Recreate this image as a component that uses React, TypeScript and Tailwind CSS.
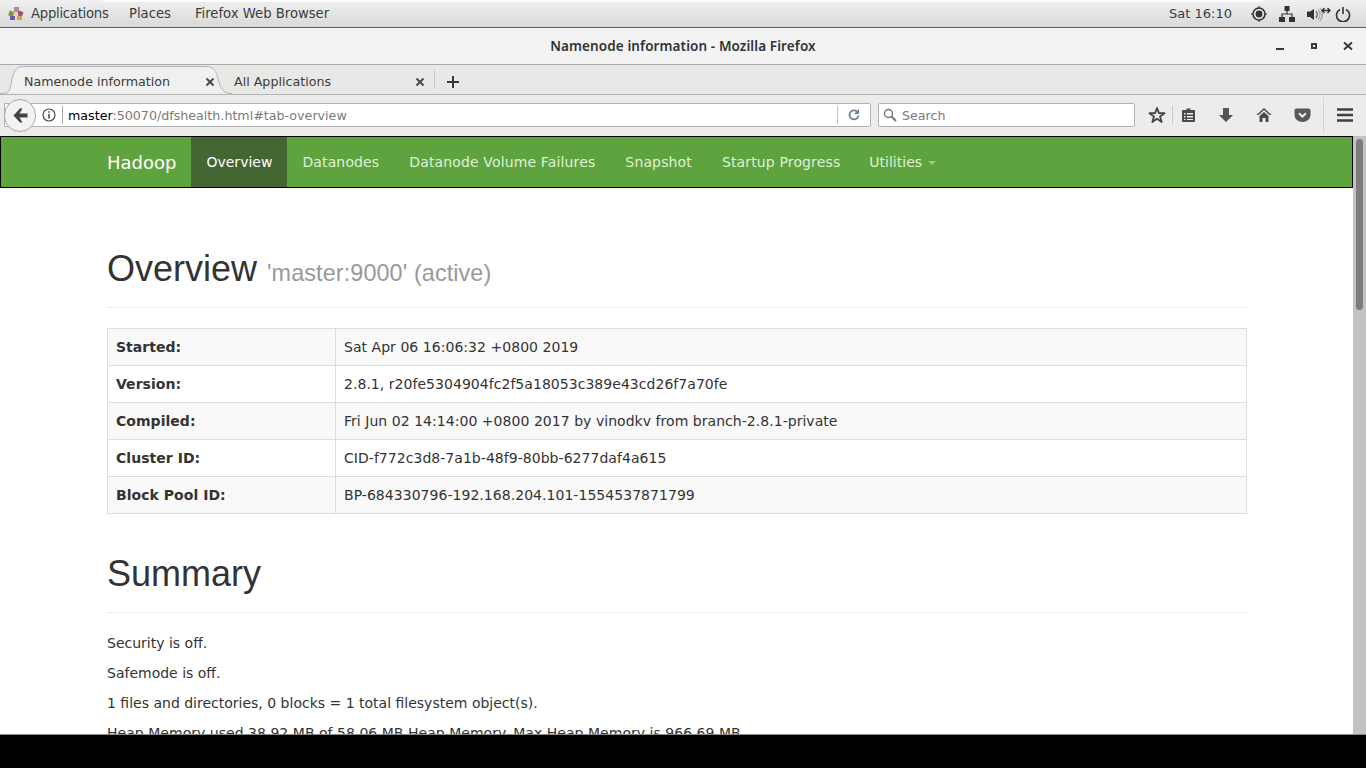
import type { ReactNode } from "react";

const rows = [
  ["Started:", "Sat Apr 06 16:06:32 +0800 2019"],
  ["Version:", "2.8.1, r20fe5304904fc2f5a18053c389e43cd26f7a70fe"],
  ["Compiled:", "Fri Jun 02 14:14:00 +0800 2017 by vinodkv from branch-2.8.1-private"],
  ["Cluster ID:", "CID-f772c3d8-7a1b-48f9-80bb-6277daf4a615"],
  ["Block Pool ID:", "BP-684330796-192.168.204.101-1554537871799"],
];

const navItems = ["Datanodes", "Datanode Volume Failures", "Snapshot", "Startup Progress"];

function Icon({ w = 16, h = 16, children, className = "" }: { w?: number; h?: number; children: ReactNode; className?: string }) {
  return (
    <svg width={w} height={h} viewBox={`0 0 ${w} ${h}`} className={`shrink-0 ${className}`}>
      {children}
    </svg>
  );
}

function TopBar() {
  return (
    <div className="relative flex h-[28px] shrink-0 items-center border-b border-[#5f5f5f] bg-gradient-to-b from-[#f0f0f0] to-[#d9d9d9] text-[13.2px] text-[#3a3d3f]">
      <div className="absolute left-[103px] top-0 h-[2px] w-[1160px] bg-white" />
      <Icon className="ml-[8px]">
        <rect x="1" y="5" width="5" height="5" fill="#7a9a46" transform="rotate(20 3 7)" />
        <rect x="6" y="1" width="5" height="5" fill="#b8859e" />
        <rect x="10" y="5" width="5" height="5" fill="#a24a78" transform="rotate(20 12 7)" />
        <rect x="2" y="10" width="5" height="4" fill="#6a5aa8" />
        <rect x="9" y="10" width="5" height="4" fill="#d9a441" />
        <rect x="6" y="6" width="4" height="4" fill="#e8d8a8" />
      </Icon>
      <span className="ml-[7px] w-[76px] tracking-[-0.25px] whitespace-nowrap">Applications</span>
      <span className="ml-[22px]">Places</span>
      <span className="ml-[24px]">Firefox Web Browser</span>
      <span className="ml-auto mr-[19px] text-[13px]">Sat 16:10</span>
      <Icon className="mr-[12px]">
        <circle cx="8" cy="8" r="6" fill="none" stroke="#333" strokeWidth="1.6" />
        <circle cx="8" cy="8" r="3.4" fill="#333" />
        <path d="M8 0v2M8 14v2M0 8h2M14 8h2" stroke="#333" strokeWidth="1" />
      </Icon>
      <Icon className="mr-[12px]">
        <path d="M5.5 0h5v5h-5zM0 11h6v5H0zM10 11h6v5h-6z" fill="#333" />
        <path d="M8 5v3M3 11V8h10v3" fill="none" stroke="#333" strokeWidth="1.2" />
      </Icon>
      <Icon w={24} className="mr-[4px]">
        <path d="M0 5.5h3L7 3v11L3 11H0z" fill="#333" />
        <path d="M9 5c1.5 2 1.5 5 0 7" fill="none" stroke="#555" strokeWidth="1.2" />
        <path d="M11 3.5c2.5 3 2.5 7 0 10M13 2c3 4 3 9 0 13" fill="none" stroke="#a5a5a5" strokeWidth="1.2" />
        <path d="M15 4.5h8M17.5 2 15 4.500 17.500 7M20.500 2 23 4.500 20.500 7" fill="none" stroke="#333" strokeWidth="1.400" />
      </Icon>
      <Icon className="mr-[15px]">
        <path d="M5 3.500a6.500 6.500 0 1 0 6 0" fill="none" stroke="#333" strokeWidth="1.600" />
        <path d="M8 1v7" stroke="#333" strokeWidth="1.600" />
      </Icon>
    </div>
  );
}

function TitleBar() {
  return (
    <div className="relative flex h-[37px] shrink-0 items-center justify-center border-b border-[#a9a9a9] bg-[#f3f3f3] font-['Noto_Sans',sans-serif] text-[13.5px] font-semibold tracking-[0.1px] text-[#2e3436]">
      <span>Namenode information - Mozilla Firefox</span>
      <div className="absolute right-[11px] top-[12px] flex items-start">
        <Icon w={14} h={14}>
          <rect x="2" y="8" width="8" height="2" fill="#3a3a3a" />
        </Icon>
        <Icon w={14} h={14} className="ml-[19px]">
          <path d="M4 3h6v6H4z M6 5v2h2V5z" fill="#3a3a3a" fillRule="evenodd" />
        </Icon>
        <Icon w={14} h={14} className="ml-[20px]">
          <path d="M3 2.500 11 9.500M11 2.500 3 9.500" stroke="#3a3a3a" strokeWidth="2" />
        </Icon>
      </div>
    </div>
  );
}

function TabClose() {
  return (
    <svg width="10" height="10" viewBox="0 0 10 10" className="shrink-0">
      <path d="M1.500 1.500 8.500 8.500M8.500 1.500 1.500 8.500" stroke="#4a4a4a" strokeWidth="2" />
    </svg>
  );
}

function TabStrip() {
  return (
    <div className="flex h-[30px] shrink-0 items-stretch border-b border-[#b4b4b4] bg-[#e8e8e7] text-[12.67px] text-[#3b3b3b]">
      <div className="relative flex w-[228px] items-center pl-[24px] pr-[13px] pt-[4px]">
        <svg width="236" height="30" viewBox="0 0 236 30" className="absolute left-0 top-0">
          <path d="M-1 28.500H3C10 28.500 10 24 12 14C14 5 17 1.500 24 1.500H206C214 1.500 216 6 218 14C220 23 223 28.500 232 28.500" fill="#f0f0ef" stroke="#b0b4b8" />
        </svg>
        <span className="relative">Namenode information</span>
        <span className="relative ml-auto"><TabClose /></span>
      </div>
      <div className="flex w-[206px] items-center pl-[6px] pr-[9px] pt-[4px]">
        <span className="relative">All Applications</span>
        <span className="ml-auto"><TabClose /></span>
      </div>
      <div className="my-[5px] w-px bg-[#c8c8c8]" />
      <div className="ml-[11px] flex items-center pt-[4px]">
        <svg width="14" height="14" viewBox="0 0 14 14">
          <path d="M7 1v12M1 7h12" stroke="#3a3a3a" strokeWidth="2" />
        </svg>
      </div>
    </div>
  );
}

function NavBar() {
  return (
    <div className="flex h-[41px] shrink-0 items-center bg-[#ececeb] pb-[1px] text-[#4a4a4a]">
      <div className="relative ml-[4px] flex h-[24px] w-[867px] items-center rounded-r-[2px] border border-[#b3b3b3] bg-white pl-[37px]">
        <svg width="14" height="14" viewBox="0 0 14 14" className="shrink-0">
          <circle cx="7" cy="7" r="6" fill="none" stroke="#4a4a4a" strokeWidth="1.200" />
          <path d="M7 6v4.500M7 3.200v1.600" stroke="#4a4a4a" strokeWidth="1.600" />
        </svg>
        <div className="ml-[6px] h-[18px] w-px bg-[#a8a8a8]" />
        <span className="ml-[5px] text-[12.67px] text-[#7a7a7a]"><span className="text-black">master</span>:50070/dfshealth.html#tab-overview</span>
        <div className="ml-auto h-[18px] w-px bg-[#c4c4c4]" />
        <svg width="14" height="14" viewBox="0 0 14 14" className="mx-[9px] shrink-0">
          <path d="M11.500 7.500A4.500 4.500 0 1 1 10 3.500" fill="none" stroke="#6f8296" strokeWidth="1.800" />
          <path d="M12 1v5H7z" fill="#6f8296" />
        </svg>
        <div className="absolute left-[-1px] top-[-5px] flex h-[33px] w-[32px] items-center justify-center rounded-full border border-[#a8a8a8] bg-[#f3f3f3]">
          <svg width="15" height="15" viewBox="0 0 15 15">
            <path d="M7 0.500 0.500 7.500 7 14.500h2.500L6.500 9.500H14.500v-4H6.500L9.500 0.500z" fill="#444" />
          </svg>
        </div>
      </div>
      <div className="ml-[7px] flex h-[24px] w-[257px] items-center rounded-[2px] border border-[#b3b3b3] bg-white pl-[4px] text-[12.67px] text-[#7a7a7a]">
        <svg width="14" height="14" viewBox="0 0 14 14" className="shrink-0">
          <circle cx="5.500" cy="5.500" r="4" fill="none" stroke="#777" strokeWidth="1.500" />
          <path d="M8.500 8.500 13 13" stroke="#777" strokeWidth="2" />
        </svg>
        <span className="ml-[5px]">Search</span>
      </div>
      <svg width="18" height="18" viewBox="0 0 18 18" className="ml-[13px] shrink-0">
        <path d="M9 2 11 7.200H16.500L12 10.500 13.700 16 9 12.700 4.300 16 6 10.500 1.500 7.200H7z" fill="none" stroke="#444" strokeWidth="1.800" strokeLinejoin="round" />
      </svg>
      <div className="ml-[6px] h-[18px] w-px bg-[#c8c8c8]" />
      <svg width="16" height="16" viewBox="0 0 16 16" className="ml-[8px] shrink-0">
        <path d="M5.500 3V1.500h4V3H13a1 1 0 0 1 1 1v10a1 1 0 0 1-1 1H2a1 1 0 0 1-1-1V4a1 1 0 0 1 1-1z" fill="#4a4a4a" />
        <path d="M3 6h1.500v1.500H3zM6 6h6v1.500H6zM3 9h1.500v1.500H3zM6 9h6v1.500H6zM3 12h1.500v1H3zM6 12h6v1H6z" fill="#eee" />
      </svg>
      <svg width="16" height="16" viewBox="0 0 16 16" className="ml-[21px] shrink-0">
        <path d="M5 1h6v7h4l-7 7-7-7h4z" fill="#555" />
      </svg>
      <svg width="16" height="16" viewBox="0 0 16 16" className="ml-[22px] shrink-0">
        <path d="M8 1 0.500 8h2L8 3l5.500 5h2z" fill="#4a4a4a" />
        <path d="M3.500 9 8 5l4.500 4v6H9.500v-4h-3v4h-3z" fill="#4a4a4a" />
      </svg>
      <svg width="17" height="16" viewBox="0 0 17 16" className="ml-[22px] shrink-0">
        <path d="M2.500 1.500h12a2 2 0 0 1 2 2V8a8 7 0 0 1-16 0V3.500a2 2 0 0 1 2-2z" fill="#595959" />
        <path d="M5 6.200 8.500 9.500 12 6.200" fill="none" stroke="#eee" strokeWidth="2.200" />
      </svg>
      <div className="ml-[12px] h-[36px] w-px bg-[#d4d4d4]" />
      <svg width="18" height="14" viewBox="0 0 18 14" className="ml-[12px] shrink-0">
        <path d="M1 1.500h16M1 7h16M1 12.500h16" stroke="#3f3f3f" strokeWidth="2.400" />
      </svg>
    </div>
  );
}

function Heading({ children, className = "" }: { children: ReactNode; className?: string }) {
  return (
    <div className={`border-b border-[#eeeeee] pb-[18px] pt-[1px] font-['Liberation_Sans',sans-serif] text-[36px] leading-[40px] text-[#333333] ${className}`}>
      {children}
    </div>
  );
}

function Page() {
  return (
    <div className="flex min-h-0 flex-1 overflow-hidden border-b border-[#8a8a8a] bg-white">
      <div className="min-w-0 flex-1 overflow-hidden text-[14px] leading-[20px] text-[#333333]">
        <div className="flex h-[52px] border border-black bg-[#5fa33e] tracking-[0.14px] text-[#dff0d8]">
          <div className="ml-[106px] flex items-center pr-[15px] pt-[2px] text-[18px] tracking-normal text-white">Hadoop</div>
          <div className="flex items-center bg-[#446633] px-[15px] tracking-normal text-white">Overview</div>
          {navItems.map((item) => (
            <div key={item} className="flex items-center px-[15px]">{item}</div>
          ))}
          <div className="flex items-center pl-[14px] pr-[15px] tracking-normal">
            Utilities
            <span className="ml-[6px] mt-[2px] h-0 w-0 border-x-[4px] border-t-[4px] border-x-transparent border-t-[#9fca8c]" />
          </div>
        </div>
        <div className="ml-[107px] w-[1140px]">
          <Heading className="mt-[60px]">
            Overview <span className="text-[23.4px] leading-none tracking-[0.1px] text-[#999999]">'master:9000' (active)</span>
          </Heading>
          <table className="mt-[20px] w-full border-collapse border border-[#dddddd] tracking-[0.04px]">
            <tbody>
              {rows.map(([label, value], i) => (
                <tr key={label} className={i % 2 === 0 ? "bg-[#f9f9f9]" : ""}>
                  <td className="w-[228px] border border-[#dddddd] p-[8px] font-bold">{label}</td>
                  <td className="border border-[#dddddd] p-[8px]">{value}</td>
                </tr>
              ))}
            </tbody>
          </table>
          <Heading className="mt-[39px]">Summary</Heading>
          <p className="mt-[20px]">Security is off.</p>
          <p className="mt-[10px]">Safemode is off.</p>
          <p className="mt-[10px]">1 files and directories, 0 blocks = 1 total filesystem object(s).</p>
          <p className="mt-[10px] tracking-[0.03px]">Heap Memory used 38.92 MB of 58.06 MB Heap Memory. Max Heap Memory is 966.69 MB.</p>
        </div>
      </div>
      <div className="w-[13px] shrink-0 bg-[#c2c2c2] px-[3px] pt-[3px]">
        <div className="h-[171px] rounded-full bg-[#7c7c7c]" />
      </div>
    </div>
  );
}

export default function App() {
  return (
    <div className="flex h-[768px] w-[1366px] flex-col overflow-hidden bg-black font-['DejaVu_Sans',sans-serif]">
      <TopBar />
      <TitleBar />
      <TabStrip />
      <NavBar />
      <Page />
      <div className="h-[33px] shrink-0 bg-black" />
    </div>
  );
}
